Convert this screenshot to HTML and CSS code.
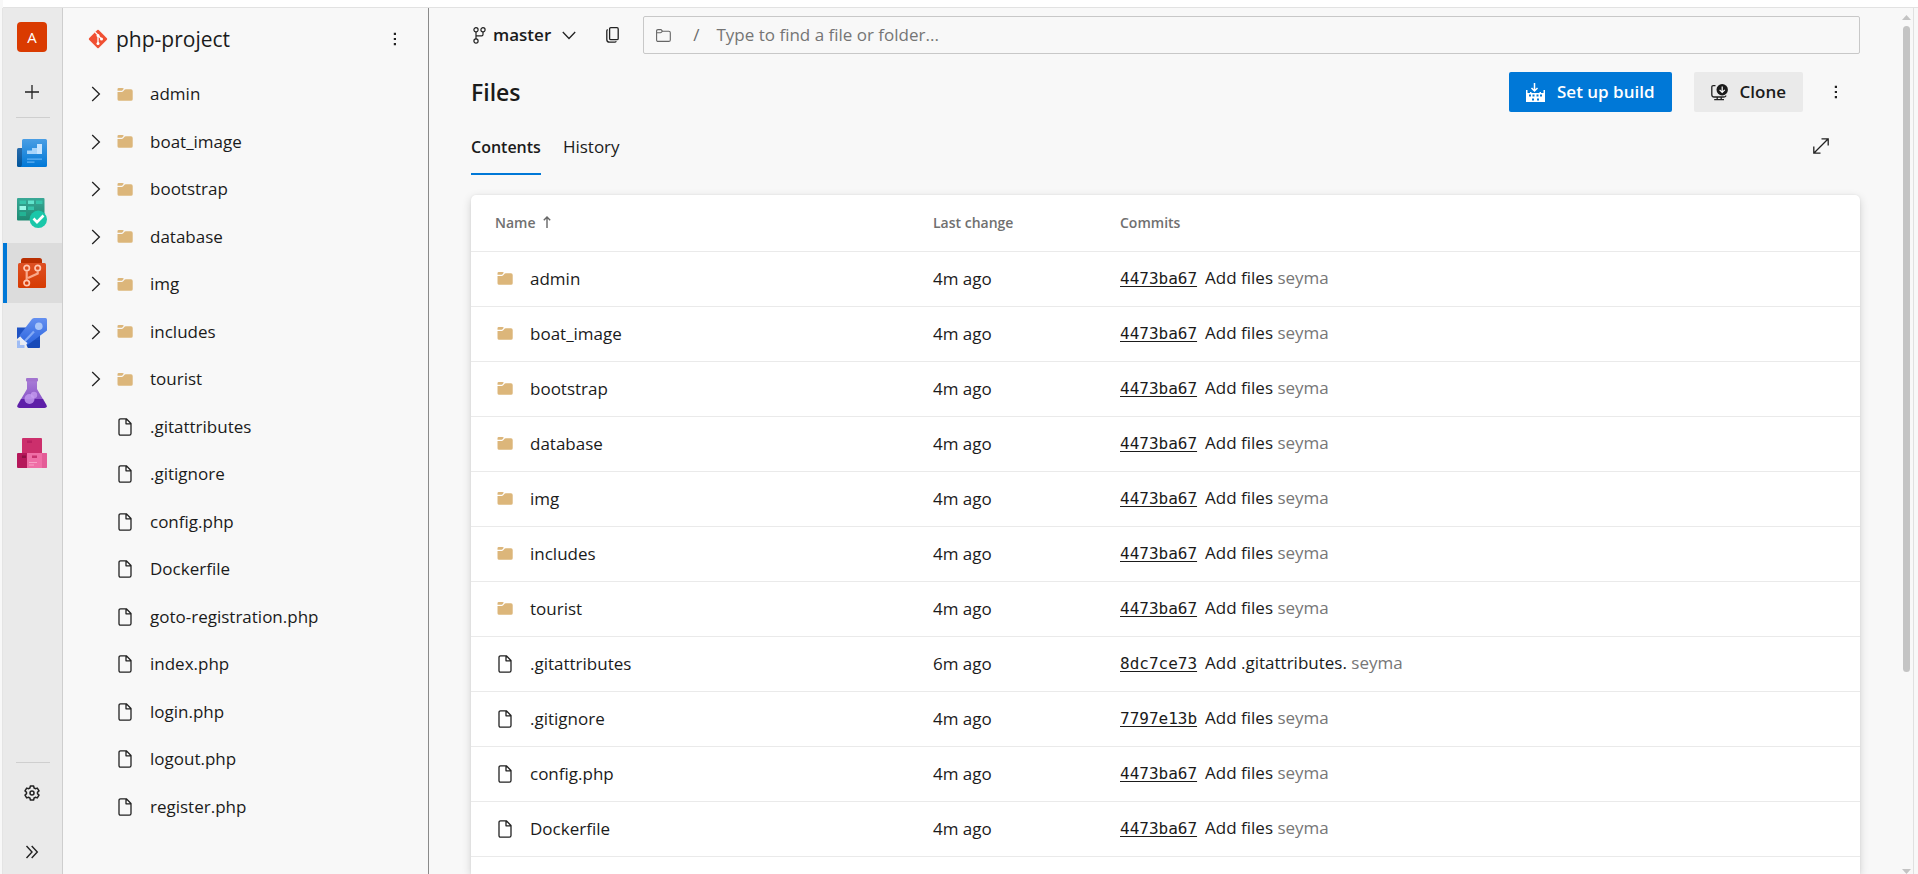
FILE: index.html
```html
<!DOCTYPE html>
<html lang="en">
<head>
<meta charset="utf-8">
<title>php-project - Files</title>
<meta name="viewport" content="width=device-width, initial-scale=1">
<link rel="stylesheet" href="styles.css">
</head>
<body>
<svg class="sprite" aria-hidden="true">
  <symbol id="folder" viewBox="0 0 16 13"><path fill="#dcb67a" d="M.5 1.2Q.5 0 1.700 0H5.300Q6.600 0 6.800 .8L5.500 2.300Q5 2.800 4.300 2.800H.5ZM.5 3.900H4.700Q5.600 3.900 6.200 3.300L7.800 1.600Q8.200 1.200 8.900 1.200H14Q15.700 1.200 15.700 2.900V11.300Q15.700 12.800 14 12.800H2.200Q.5 12.800 .5 11.300Z"/></symbol>
  <symbol id="file" viewBox="0 0 14 18"><path fill="none" stroke="#222" stroke-width="1.300" stroke-linejoin="round" d="M2.600 .8H8.300L13 5.500V15.600Q13 17.200 11.400 17.200H2.600Q1 17.200 1 15.600V2.400Q1 .8 2.600 .8ZM8 1V5.800H13"/></symbol>
  <symbol id="chevron" viewBox="0 0 10 16"><path fill="none" stroke="#222" stroke-width="1.300" d="M1.200 1L8.400 8L1.200 15"/></symbol>
  <symbol id="dots" viewBox="0 0 4 14"><path fill="#222" d="M.8 .8h2.200v2.200H.8zM.8 5.900h2.200v2.200H.8zM.8 11h2.200v2.200H.8z"/></symbol>
</svg>
<div class="topbar"></div>
<div class="app">
  <nav class="rail" aria-label="Project">
    <a class="rail-item rail-project" href="#"><span class="avatar">A</span></a>
    <button class="rail-item rail-add" aria-label="Add"><svg width="14" height="14" viewBox="0 0 14 14"><path d="M7 0V14M0 7H14" stroke="#222" stroke-width="1.300"/></svg></button>
    <div class="rail-line"></div>
    <a class="rail-item" href="#" aria-label="Overview">
      <svg width="30" height="28" viewBox="0 0 30 28"><defs><linearGradient id="g1" x2="0" y2="1"><stop stop-color="#4a9ee4"/><stop offset="1" stop-color="#0078d7"/></linearGradient><linearGradient id="g1b" x2="0" y2="1"><stop stop-color="#2a6cab"/><stop offset="1" stop-color="#00559c"/></linearGradient></defs><path fill="url(#g1b)" d="M1.500 9H6V28H1.500Q0 28 0 26.500V10.500Q0 9 1.500 9Z"/><path fill="url(#g1)" d="M6.500 0H28.500Q30 0 30 1.500V26.500Q30 28 28.500 28H3.500Q5 27.500 5 25V1.500Q5 0 6.500 0Z"/><path fill="#a6d4fb" d="M10 15V11.500H15V9H20V5H25V15Z"/><path fill="#c7e5ff" d="M20 5H25V15H20Z"/><path fill="#62b2f3" d="M10 19.500H25V20.700H10ZM10 22.500H17.500V23.700H10Z"/></svg>
    </a>
    <a class="rail-item" href="#" aria-label="Boards">
      <svg width="30" height="30" viewBox="0 0 30 30"><defs><linearGradient id="g2" x2="0" y2="1"><stop stop-color="#3aa896"/><stop offset="1" stop-color="#1e8a72"/></linearGradient></defs><rect width="27.500" height="22.500" rx="1" fill="url(#g2)"/><path fill="#36c4aa" d="M2.500 2.500H9V6H2.500ZM19 2.500H25.500V6H19ZM11 8.500H17V12H11Z"/><path fill="#22b394" d="M2.500 14H9V18H2.500Z"/><path fill="#62e4cd" d="M11 2.500H17V6H11Z"/><path fill="#9af7e6" d="M2.500 8H9V12H2.500Z"/><circle cx="21.300" cy="21.300" r="8.700" fill="#1ac7a9"/><path fill="none" stroke="#fff" stroke-width="2.600" d="M16.500 20.500L20 24.200L26.500 17.500"/></svg>
    </a>
    <a class="rail-item active" href="#" aria-label="Repos">
      <svg width="30" height="30" viewBox="0 0 30 30"><defs><linearGradient id="g3" x2="0" y2="1"><stop stop-color="#de5024"/><stop offset="1" stop-color="#d63b02"/></linearGradient></defs><path fill="#b92f02" d="M4 5V2.500Q4 0 6.500 0H22.500Q25 0 25 2.500V5Z"/><rect x="1" y="5" width="28" height="25" rx="1.500" fill="url(#g3)"/><g fill="none" stroke="#ffc7b2" stroke-width="1.700"><circle cx="9.700" cy="10" r="2.700"/><circle cx="20.700" cy="10" r="2.700"/><circle cx="9.700" cy="25" r="2.700"/></g><path fill="none" stroke="#f9a88a" stroke-width="2.200" d="M9.700 13V22M20.700 13V15.500L11 20"/></svg>
    </a>
    <a class="rail-item" href="#" aria-label="Pipelines">
      <svg width="30" height="30" viewBox="0 0 30 30"><defs><linearGradient id="g4" x2="0" y2="1"><stop stop-color="#6590f0"/><stop offset="1" stop-color="#2a64de"/></linearGradient></defs><path fill="#1f53c4" d="M0 9.500H10L3 18.500L0 21ZM9 26L23 15V28.500Q23 30 21.500 30H11Z"/><path fill="#174ab8" d="M8 22H23V28.500Q23 30 21.500 30H11Z"/><path fill="url(#g4)" d="M17.500 0H28.500Q30 0 30 1.500V12.500L10.500 27L2.500 17.500L15 1Q16 0 17.500 0Z"/><circle cx="21.800" cy="8.200" r="3.800" fill="#a9c5f8"/><path stroke="#83a9f5" stroke-width="2.200" d="M8 23L17 13.500"/><path fill="#e8edf8" d="M3 19.500L6 21.500L10.500 25L8.500 28L4.500 25L2 22.500Z"/><path fill="#9fbcf4" d="M0 22.500H3V27H7.500V30H0Z"/></svg>
    </a>
    <a class="rail-item" href="#" aria-label="Test Plans">
      <svg width="30" height="30" viewBox="0 0 30 30"><defs><linearGradient id="g5" x2="0" y2="1"><stop stop-color="#a77bd6"/><stop offset="1" stop-color="#8a56c8"/></linearGradient></defs><path fill="url(#g5)" d="M10 3H20V11L26.500 22H3.500L10 11Z"/><path fill="#5e1fa8" d="M4 21H26L29.500 27Q30.500 30 27.500 30H2.500Q-.5 30 .5 27Z"/><rect x="9" width="12" height="3.500" rx="1" fill="#a274cf"/><circle cx="12.500" cy="21" r="5" fill="#c097ee" fill-opacity=".85"/><circle cx="17" cy="17" r="3.200" fill="#c79df0" fill-opacity=".75"/></svg>
    </a>
    <a class="rail-item" href="#" aria-label="Artifacts">
      <svg width="30" height="30" viewBox="0 0 30 30"><rect x="5" width="20" height="16" rx="1" fill="#cc2f6c"/><path fill="#b92060" d="M10 2.500H15V5H10Z"/><path fill="#b5175a" d="M1 15H10V30H1Q0 30 0 29V16Q0 15 1 15Z"/><path fill="#ef6ea6" d="M10 15H29Q30 15 30 16V29Q30 30 29 30H10Z"/><path fill="#e45c97" d="M25 15H29Q30 15 30 16V29Q30 30 29 30H25Z"/><path fill="#8e0f43" d="M5 17.500H9V20H5Z"/><path fill="#c9316f" d="M15 17.500H20V20H15Z"/><path fill="#f7a0c6" d="M12 24H20V25H12ZM12 26.500H17V27.500H12Z"/></svg>
    </a>
    <div class="rail-space"></div>
    <div class="rail-line"></div>
    <a class="rail-item" href="#" aria-label="Project settings">
      <svg width="16" height="16" viewBox="0 0 16 16" fill="none" stroke="#222" stroke-width="1.500" stroke-linejoin="round"><path d="M6.400 1H9.600L10.100 3L11.300 3.700L13.300 3.100L15 5.900L13.500 7.300V8.700L15 10.100L13.300 12.900L11.300 12.300L10.100 13L9.600 15H6.400L5.900 13L4.700 12.300L2.700 12.900L1 10.100L2.500 8.700V7.300L1 5.900L2.700 3.100L4.700 3.700L5.900 3Z"/><circle cx="8" cy="8" r="2"/></svg>
    </a>
    <button class="rail-item rail-expand" aria-label="Expand"><svg width="14" height="14" viewBox="0 0 14 14"><path d="M1.500 1L7 7L1.500 13M6.700 1L12.300 7L6.700 13" fill="none" stroke="#222" stroke-width="1.400"/></svg></button>
  </nav>

  <aside class="sidebar">
    <header class="repo">
      <svg width="20" height="20" viewBox="0 0 20 20"><rect x="3.200" y="3.200" width="13.600" height="13.600" rx="1" fill="#f05033" transform="rotate(45 10 10)"/><path d="M7.200 3.200L10 6V14.500M10 6.500L13.500 10" fill="none" stroke="#fff" stroke-width="1.300"/><g fill="#fff"><circle cx="10" cy="6.500" r="1.500"/><circle cx="10" cy="14.500" r="1.500"/><circle cx="13.500" cy="10" r="1.500"/></g></svg>
      <span class="repo-name">php-project</span>
      <button class="icon-btn" aria-label="Repository actions"><svg width="4" height="14"><use href="#dots"/></svg></button>
    </header>
    <ul class="tree">
      <li><svg class="chev"><use href="#chevron"/></svg><svg class="folder"><use href="#folder"/></svg><a href="#">admin</a></li>
      <li><svg class="chev"><use href="#chevron"/></svg><svg class="folder"><use href="#folder"/></svg><a href="#">boat_image</a></li>
      <li><svg class="chev"><use href="#chevron"/></svg><svg class="folder"><use href="#folder"/></svg><a href="#">bootstrap</a></li>
      <li><svg class="chev"><use href="#chevron"/></svg><svg class="folder"><use href="#folder"/></svg><a href="#">database</a></li>
      <li><svg class="chev"><use href="#chevron"/></svg><svg class="folder"><use href="#folder"/></svg><a href="#">img</a></li>
      <li><svg class="chev"><use href="#chevron"/></svg><svg class="folder"><use href="#folder"/></svg><a href="#">includes</a></li>
      <li><svg class="chev"><use href="#chevron"/></svg><svg class="folder"><use href="#folder"/></svg><a href="#">tourist</a></li>
      <li><span class="chev"></span><svg class="file"><use href="#file"/></svg><a href="#">.gitattributes</a></li>
      <li><span class="chev"></span><svg class="file"><use href="#file"/></svg><a href="#">.gitignore</a></li>
      <li><span class="chev"></span><svg class="file"><use href="#file"/></svg><a href="#">config.php</a></li>
      <li><span class="chev"></span><svg class="file"><use href="#file"/></svg><a href="#">Dockerfile</a></li>
      <li><span class="chev"></span><svg class="file"><use href="#file"/></svg><a href="#">goto-registration.php</a></li>
      <li><span class="chev"></span><svg class="file"><use href="#file"/></svg><a href="#">index.php</a></li>
      <li><span class="chev"></span><svg class="file"><use href="#file"/></svg><a href="#">login.php</a></li>
      <li><span class="chev"></span><svg class="file"><use href="#file"/></svg><a href="#">logout.php</a></li>
      <li><span class="chev"></span><svg class="file"><use href="#file"/></svg><a href="#">register.php</a></li>
    </ul>
  </aside>

  <main class="main">
    <div class="pathbar">
      <button class="branch">
        <svg width="13" height="17" viewBox="0 0 13 17" fill="none" stroke="#222" stroke-width="1.200"><circle cx="3" cy="2.800" r="2.100"/><circle cx="10" cy="2.800" r="2.100"/><circle cx="3" cy="14" r="2.100"/><path d="M3 5V12M10 5V7.500Q10 8.800 8.700 8.800H3"/></svg>
        <span>master</span>
        <svg width="14" height="9" viewBox="0 0 14 9"><path d="M.8 1L7 7.500L13.200 1" fill="none" stroke="#222" stroke-width="1.300"/></svg>
      </button>
      <button class="icon-btn copy" aria-label="Copy branch name"><svg width="13" height="16" viewBox="0 0 13 16" fill="none" stroke="#222" stroke-width="1.300"><rect x="3.600" y=".7" width="8.600" height="12" rx="1.200"/><path d="M1.700 2.500Q.8 3 .8 4V12.500Q.8 15.200 3.500 15.200H8.500Q9.800 15.200 10.300 14.300"/></svg></button>
      <div class="search">
        <svg width="15" height="13" viewBox="0 0 15 13" fill="none" stroke="#666" stroke-width="1.100"><path d="M2 .6H5L6.500 2.200H12.800Q14.300 2.200 14.300 3.700V11Q14.300 12.400 12.800 12.400H2.100Q.6 12.400 .6 11V2Q.6 .6 2 .6ZM.6 3.800H4.500Q5.300 3.800 6.500 2.200"/></svg>
        <span class="slash">/</span>
        <input type="text" aria-label="Find a file or folder" placeholder="Type to find a file or folder...">
      </div>
    </div>

    <div class="title-row">
      <h1>Files</h1>
      <button class="btn primary"><svg width="19" height="19" viewBox="0 0 19 19"><path fill="#fff" fill-rule="evenodd" d="M0 7H1.500V10H4V9H5.500V10H13.500V9H15V10H17.500V7H19V19H0ZM3 11.500H5V13.500H3ZM6.500 11.500H8.500V13.500H6.500ZM10.500 11.500H12.500V13.500H10.500ZM14 11.500H16V13.500H14ZM6 15.500H8V17.500H6ZM11 15.500H13V17.500H11Z"/><path d="M8.500 0V8M5.500 5L8.500 8L11.500 5" fill="none" stroke="#fff" stroke-width="1.500"/></svg>Set up build</button>
      <button class="btn"><svg width="17" height="17" viewBox="0 0 17 17"><path d="M4.500 1.700H2.300Q.8 1.700 .8 3.200V10.500Q.8 13 3 13H12.500Q14.800 13 14.800 11.500M6.200 13V15.500M10.200 13V15.500M3.200 15.700H13" fill="none" stroke="#222" stroke-width="1.300"/><circle cx="11.200" cy="5.700" r="5.700" fill="#1a1a1a"/><path d="M11.200 2.500V8.300M8.600 5.900L11.200 8.500L13.800 5.900" fill="none" stroke="#fff" stroke-width="1.200"/></svg>Clone</button>
      <button class="icon-btn more" aria-label="More actions"><svg width="4" height="14"><use href="#dots"/></svg></button>
    </div>

    <div class="tabs">
      <a class="tab selected" href="#">Contents</a>
      <a class="tab" href="#">History</a>
      <button class="icon-btn full" aria-label="Full screen"><svg width="16" height="16" viewBox="0 0 16 16"><path d="M1 15L15 1M8.500 .8H15.200V7.500M.8 8.500V15.200H7.500" fill="none" stroke="#222" stroke-width="1.300"/></svg></button>
    </div>

    <div class="card">
      <table class="files">
        <colgroup><col class="c-name"><col class="c-change"><col></colgroup>
        <thead><tr><th>Name <svg class="sort" viewBox="0 0 8 12"><path d="M4 12V1M.8 4.200L4 1L7.200 4.200" fill="none" stroke="#666" stroke-width="1.400"/></svg></th><th>Last change</th><th>Commits</th></tr></thead>
        <tbody>
          <tr><td><div class="name"><svg class="folder"><use href="#folder"/></svg><a href="#">admin</a></div></td><td>4m ago</td><td><a class="hash" href="#">4473ba67</a>Add files <span class="author">seyma</span></td></tr>
          <tr><td><div class="name"><svg class="folder"><use href="#folder"/></svg><a href="#">boat_image</a></div></td><td>4m ago</td><td><a class="hash" href="#">4473ba67</a>Add files <span class="author">seyma</span></td></tr>
          <tr><td><div class="name"><svg class="folder"><use href="#folder"/></svg><a href="#">bootstrap</a></div></td><td>4m ago</td><td><a class="hash" href="#">4473ba67</a>Add files <span class="author">seyma</span></td></tr>
          <tr><td><div class="name"><svg class="folder"><use href="#folder"/></svg><a href="#">database</a></div></td><td>4m ago</td><td><a class="hash" href="#">4473ba67</a>Add files <span class="author">seyma</span></td></tr>
          <tr><td><div class="name"><svg class="folder"><use href="#folder"/></svg><a href="#">img</a></div></td><td>4m ago</td><td><a class="hash" href="#">4473ba67</a>Add files <span class="author">seyma</span></td></tr>
          <tr><td><div class="name"><svg class="folder"><use href="#folder"/></svg><a href="#">includes</a></div></td><td>4m ago</td><td><a class="hash" href="#">4473ba67</a>Add files <span class="author">seyma</span></td></tr>
          <tr><td><div class="name"><svg class="folder"><use href="#folder"/></svg><a href="#">tourist</a></div></td><td>4m ago</td><td><a class="hash" href="#">4473ba67</a>Add files <span class="author">seyma</span></td></tr>
          <tr><td><div class="name"><svg class="file"><use href="#file"/></svg><a href="#">.gitattributes</a></div></td><td>6m ago</td><td><a class="hash" href="#">8dc7ce73</a>Add .gitattributes. <span class="author">seyma</span></td></tr>
          <tr><td><div class="name"><svg class="file"><use href="#file"/></svg><a href="#">.gitignore</a></div></td><td>4m ago</td><td><a class="hash" href="#">7797e13b</a>Add files <span class="author">seyma</span></td></tr>
          <tr><td><div class="name"><svg class="file"><use href="#file"/></svg><a href="#">config.php</a></div></td><td>4m ago</td><td><a class="hash" href="#">4473ba67</a>Add files <span class="author">seyma</span></td></tr>
          <tr><td><div class="name"><svg class="file"><use href="#file"/></svg><a href="#">Dockerfile</a></div></td><td>4m ago</td><td><a class="hash" href="#">4473ba67</a>Add files <span class="author">seyma</span></td></tr>
        </tbody>
      </table>
    </div>
  </main>

  <div class="scrollbar" aria-hidden="true">
    <svg width="9" height="5" viewBox="0 0 9 5"><path fill="#c4c4c4" d="M4.500 0L9 5H0Z"/></svg>
    <div class="track"><div class="thumb"></div></div>
    <svg width="9" height="5" viewBox="0 0 9 5"><path fill="#c4c4c4" d="M0 0H9L4.500 5Z"/></svg>
  </div>
</div>
</body>
</html>
```
FILE: styles.css
```css
* { box-sizing: border-box; }
body {
  margin: 0;
  height: 100vh;
  display: flex;
  flex-direction: column;
  overflow: hidden;
  background: #f8f8f8;
  color: #1b1b1b;
  font: 17px/24px "Open Sans", "Noto Sans", sans-serif;
}
a { color: inherit; text-decoration: none; }
button { border: 0; padding: 0; background: none; color: inherit; font: inherit; display: flex; align-items: center; }
svg { display: block; flex: none; }
.sprite { position: absolute; width: 0; height: 0; }

.topbar { flex: none; height: 8px; background: #fff; border-bottom: 1px solid #e2e2e2; margin-left: 3px; }
.app {
  flex: 1;
  min-height: 0;
  display: flex;
  margin: 0 4px 0 2px;
  border-left: 1px solid #e4e4e4;
  border-right: 1px solid #e0e0e0;
}

.rail { flex: none; width: 60px; display: flex; flex-direction: column; background: #eaeaea; border-right: 1px solid #cecece; }
.rail-item { flex: none; height: 60px; padding-right: 1px; display: flex; align-items: center; justify-content: center; }
.rail-project { height: 58px; }
.rail-add { height: 51px; }
.rail-line { flex: none; height: 1px; margin: 0 12px 0 13px; background: #cfcfcf; }
.rail-line + .rail-item { margin-top: 5px; }
.rail-space { flex: 1; }
.rail-space + .rail-line + .rail-item { margin-top: 0; }
.rail-expand { height: 44px; margin-top: 7px; }
.active { background: #dcdcdc; border-left: 4px solid #0078d7; padding-right: 5px; }
.avatar { width: 30px; height: 30px; border-radius: 4px; background: #da3b01; color: #fff; font-size: 15px; line-height: 30px; text-align: center; }

.sidebar { flex: none; width: 366px; border-right: 1px solid #8a8a8a; }
.repo { display: flex; align-items: center; height: 62px; padding: 0 31px 0 25px; }
.repo-name { flex: 1; margin-left: 8px; font-size: 21px; }
.tree { list-style: none; margin: 0; padding: 0 0 0 28px; }
.tree li { display: flex; align-items: center; height: 47px; }
.tree li:nth-child(odd) { height: 48px; }
.chev { width: 10px; height: 16px; margin-right: 16px; }
.folder { width: 16px; height: 13px; }
.file { width: 14px; height: 18px; margin: 0 1px; }
.folder + a, .file + a { margin-left: 17px; }

.main { flex: 1; min-width: 0; display: flex; flex-direction: column; padding: 8px 40px 0 42px; }
.pathbar { flex: none; display: flex; align-items: center; height: 38px; }
.branch { gap: 7px; padding-left: 2px; font-weight: 600; }
.branch svg:last-child { margin-left: 4px; }
.copy { margin: 0 24px 0 30px; }
.search { flex: 1; height: 38px; display: flex; align-items: center; padding-left: 12px; border: 1px solid #c8c8c8; border-radius: 2px; color: #6b6b6b; }
.slash { margin: 0 17px 0 22px; }
.search input { flex: 1; border: 0; padding: 0; background: none; font: inherit; outline: 0; }
.search input::placeholder { color: #757575; opacity: 1; }

.title-row { flex: none; display: flex; align-items: center; height: 76px; }
h1 { flex: 1; margin: 0; font-size: 23px; line-height: 32px; font-weight: 600; }
.btn { height: 40px; gap: 12px; padding: 0 17px; border-radius: 2px; background: #eaeaea; font-weight: 600; margin-left: 22px; }
.primary { background: #0078d7; color: #fff; }
.more { width: 22px; justify-content: center; margin: 0 13px 0 22px; }

.tabs { flex: none; display: flex; height: 45px; gap: 22px; }
.tab { height: 45px; line-height: 34px; border-bottom: 2px solid transparent; }
.selected { font-weight: 600; font-size: 16px; border-color: #0078d7; }
.full { height: 32px; margin: 0 31px 0 auto; }

.card { flex: 1; margin-top: 20px; background: #fff; border-radius: 5px 5px 0 0; box-shadow: 0 3px 10px rgba(0, 0, 0, .16), 0 0 2px rgba(0, 0, 0, .08); }
.files { width: 100%; table-layout: fixed; border-collapse: collapse; }
.c-name { width: 462px; }
.c-change { width: 187px; }
th, td { height: 55px; padding: 0; text-align: left; border-bottom: 1px solid #eaeaea; vertical-align: middle; }
th { height: 56px; font-size: 14px; font-weight: 600; color: #707070; }
th:first-child { padding-left: 24px; }
td:first-child { padding-left: 26px; }
.name { display: flex; align-items: center; }
.sort { display: inline-block; width: 8px; height: 12px; margin-left: 4px; }
.hash { margin-right: 8px; font: 16px/24px "DejaVu Sans Mono", monospace; text-decoration: underline; text-underline-offset: 2px; }
.author { color: #767676; }

.scrollbar { flex: none; width: 13px; display: flex; flex-direction: column; align-items: center; padding-top: 7px; }
.track { flex: 1; width: 7px; padding: 6px 0 4px; }
.thumb { height: 77%; border-radius: 4px; background: #c4c4c4; }
```
